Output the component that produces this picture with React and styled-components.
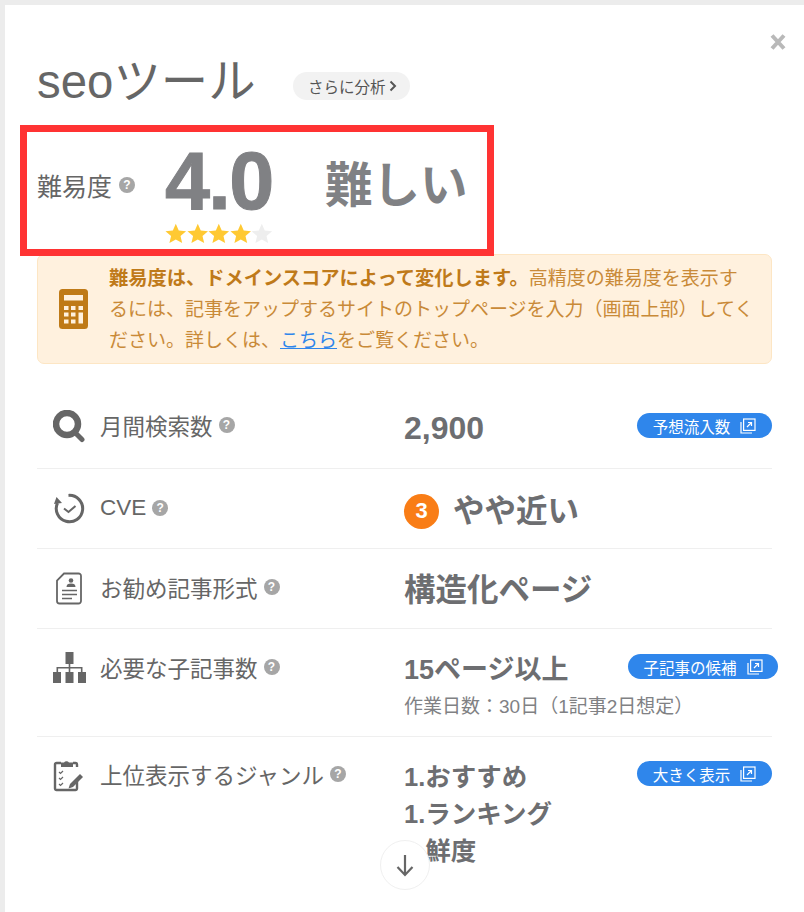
import React from 'react';
import styled, { createGlobalStyle } from 'styled-components';

const GlobalStyle = createGlobalStyle`
  html, body {
    margin: 0;
    padding: 0;
    background: #ececec;
    font-family: "Liberation Sans", "Noto Sans CJK JP", sans-serif;
  }
`;

const Backdrop = styled.div`
  width: 804px;
  height: 912px;
  box-sizing: border-box;
  padding: 5px 0 0 5px;
  overflow: hidden;
`;

const Modal = styled.div`
  position: relative;
  height: 907px;
  box-sizing: border-box;
  padding: 0 32px;
  background: #fff;
  overflow: hidden;
`;

const CloseButton = styled.div`
  position: absolute;
  top: 28px;
  right: 17px;
  width: 18px;
  height: 18px;
  color: #b9b9b9;
`;

const TitleRow = styled.div`
  display: flex;
  align-items: center;
  height: 120px;
  padding-top: 34px;
  box-sizing: border-box;
`;

const Title = styled.h1`
  margin: 0;
  width: 218px;
  font-size: 47.4px;
  font-weight: 400;
  line-height: 60px;
  white-space: nowrap;
  color: #666;
`;

const AnalyzeButton = styled.div`
  display: flex;
  align-items: center;
  gap: 3px;
  width: 117px;
  height: 28px;
  margin: 8px 0 0 38px;
  box-sizing: border-box;
  padding-left: 15px;
  border-radius: 14px;
  background: #f2f2f2;
  color: #555;
  font-size: 15.5px;
  white-space: nowrap;
`;

const DifficultyBox = styled.div`
  position: relative;
  z-index: 1;
  display: flex;
  align-items: flex-start;
  width: 474px;
  height: 131px;
  box-sizing: border-box;
  margin-left: -17px;
  padding-left: 10px;
  border: 7px solid #ff3333;
`;

const DifficultyLabel = styled.div`
  display: flex;
  align-items: center;
  gap: 7px;
  width: 128px;
  height: 106px;
  color: #666;
  font-size: 25px;
`;

const ScoreColumn = styled.div`
  display: flex;
  flex-direction: column;
  width: 160px;
`;

const Score = styled.div`
  padding-top: 7px;
  font-size: 81px;
  font-weight: 700;
  line-height: 84px;
  letter-spacing: -1.700px;
  color: #808184;
  -webkit-text-stroke: 1px #808184;
`;

const Stars = styled.div`
  display: flex;
`;

const Star = styled.svg`
  display: block;
  width: 21.6px;
  height: 21px;
  fill: ${(p) => (p.$on ? '#ffc933' : '#eeeeee')};
`;

const ScoreWord = styled.div`
  font-size: 47.5px;
  font-weight: 700;
  line-height: 108px;
  color: #808184;
`;

const Notice = styled.div`
  display: flex;
  align-items: center;
  height: 110px;
  box-sizing: border-box;
  margin-top: -2px;
  border: 1px solid #fde6c4;
  border-radius: 7px;
  background: #fff1de;
`;

const NoticeIcon = styled.div`
  display: flex;
  justify-content: center;
  width: 71px;
  flex-shrink: 0;
`;

const NoticeText = styled.p`
  margin: 0;
  font-size: 19px;
  line-height: 31px;
  white-space: nowrap;
  color: #c98a38;

  b {
    color: #bf7a1a;
    font-size: 19.25px;
    font-weight: 700;
  }

  a {
    color: #2f86eb;
    text-decoration: underline;
  }
`;

const List = styled.div`
  margin-top: 24px;
`;

const Row = styled.div`
  display: flex;
  align-items: flex-start;
  height: ${(p) => p.$height}px;
  box-sizing: border-box;
  padding-top: ${(p) => p.$top || 22}px;
  border-bottom: ${(p) => (p.$last ? 'none' : '1px solid #efefef')};
`;

const RowIcon = styled.div`
  display: flex;
  justify-content: center;
  width: 63px;
  padding-left: 1px;
  box-sizing: border-box;
  flex-shrink: 0;
  color: #666;
`;

const RowLabel = styled.div`
  display: flex;
  align-items: center;
  gap: 6px;
  width: 304px;
  height: 30px;
  flex-shrink: 0;
  font-size: 22.5px;
  color: #666;
`;

const RowValue = styled.div`
  flex: 1;
  min-width: 0;
`;

const ValueLine = styled.div`
  display: flex;
  align-items: flex-start;
  justify-content: space-between;
`;

const BigValue = styled.div`
  display: flex;
  align-items: center;
  gap: 14px;
  font-size: ${(p) => p.$size || 31.5}px;
  font-weight: 700;
  line-height: 36px;
  color: #6d6e71;
`;

const Rank = styled.span`
  display: flex;
  align-items: center;
  justify-content: center;
  width: 35px;
  height: 35px;
  border-radius: 50%;
  background: #f97d16;
  color: #fff;
  font-size: 22px;
  font-weight: 700;
`;

const SubValue = styled.div`
  margin-top: 7px;
  font-size: 19px;
  line-height: 24px;
  color: #808184;
`;

const GenreList = styled.div`
  font-size: 25.5px;
  font-weight: 700;
  line-height: 37px;
  color: #6d6e71;
`;

const BlueButton = styled.div`
  display: flex;
  align-items: center;
  justify-content: center;
  gap: 10px;
  flex-shrink: 0;
  width: ${(p) => p.$width}px;
  height: 25px;
  margin-top: ${(p) => p.$drop}px;
  margin-right: ${(p) => p.$shift || 0}px;
  border-radius: 13px;
  background: #2f86eb;
  color: #fff;
  font-size: 15.5px;
`;

const TopAligned = styled.div`
  display: flex;
  justify-content: space-between;
  align-items: flex-start;
`;

const ScrollDown = styled.div`
  position: absolute;
  left: 375px;
  top: 835px;
  display: flex;
  align-items: center;
  justify-content: center;
  width: 50px;
  height: 50px;
  box-sizing: border-box;
  border: 1px solid #f0f0f0;
  border-radius: 50%;
  background: #fff;
  color: #666;
`;

const QuestionBadge = styled.span`
  display: inline-flex;
  align-items: center;
  justify-content: center;
  width: 16px;
  height: 16px;
  border-radius: 50%;
  background: #a6a6a6;
  color: #fff;
  font-size: 12px;
  font-weight: 700;
`;

const SearchIcon = () => (
  <svg width="32" height="33" viewBox="0 0 32 33" fill="none" stroke="currentColor">
    <circle cx="14" cy="14" r="11" strokeWidth="6.500" />
    <path d="M23 23.500l6 6" strokeWidth="5" strokeLinecap="round" />
  </svg>
);

const CycleIcon = () => (
  <svg width="32" height="32" viewBox="0 0 32 32" fill="none" stroke="currentColor">
    <path d="M4.500 10A13.200 13.200 0 1 0 15.500 2.400" strokeWidth="3" />
    <path d="M1 11l2.500-7 5.500 6z" fill="currentColor" stroke="none" />
    <path d="M11 15.500l4.500 3.500 7-6" strokeWidth="2" />
  </svg>
);

const ProfileDocIcon = () => (
  <svg width="28" height="33" viewBox="0 0 28 33" fill="none" stroke="currentColor">
    <path d="M9 1.500h14.500a2.500 2.500 0 0 1 2.500 2.500v25a2.500 2.500 0 0 1-2.500 2.500h-19A2.500 2.500 0 0 1 2 29V8.500z" strokeWidth="1.800" />
    <circle cx="16" cy="8.500" r="2.300" fill="currentColor" stroke="none" />
    <path d="M11.500 15c0-2.500 1.500-3.500 4.500-3.500s4.500 1 4.500 3.500z" fill="currentColor" stroke="none" />
    <path d="M7 18.500h15M7 22.500h15M7 26.500h10" strokeWidth="1.600" />
  </svg>
);

const SitemapIcon = () => (
  <svg width="33" height="31" viewBox="0 0 33 31" fill="currentColor" stroke="none">
    <rect x="12.500" y="0" width="8" height="12" />
    <rect x="0" y="20" width="8" height="11" />
    <rect x="12.500" y="20" width="8" height="11" />
    <rect x="25" y="20" width="8" height="11" />
    <path d="M15.700 12h1.600v3h12.200v5h-1.600v-3.400h-10.600v3.400h-1.600v-3.400H5.100v3.400H3.500v-5h12.200z" />
  </svg>
);

const ClipboardIcon = () => (
  <svg width="32" height="33" viewBox="0 0 32 33" fill="none" stroke="currentColor">
    <path d="M8 4H3.500A1.500 1.500 0 0 0 2 5.500V29.500A1.500 1.500 0 0 0 3.500 31h19a1.500 1.500 0 0 0 1.500-1.500V21" strokeWidth="2.400" />
    <path d="M20 4h2.500A1.500 1.500 0 0 1 24 5.500V8" strokeWidth="2.400" />
    <path d="M8 3.500h3a3 3 0 0 1 5 0h4V8H8z" fill="currentColor" stroke="none" />
    <path d="M6 13l1.500 1.500 2.500-2.500M6 19l1.500 1.500 2.500-2.500M6 25l1.500 1.500 2.500-2.500" strokeWidth="1.200" />
    <path d="M17 25l-1.500 4.500 4.500-1.500L30 18l-3-3z" fill="currentColor" stroke="none" />
  </svg>
);

const CalculatorIcon = () => (
  <svg width="29" height="40" viewBox="0 0 29 40">
    <rect width="29" height="40" rx="3.500" fill="#bf7a17" />
    <rect x="5" y="6" width="19" height="5.500" fill="#fff1de" />
    <g fill="#fff1de">
      <rect x="5" y="17" width="4.500" height="4" />
      <rect x="12" y="17" width="4.500" height="4" />
      <rect x="19.500" y="17" width="4.500" height="4" />
      <rect x="5" y="23.500" width="4.500" height="4" />
      <rect x="12" y="23.500" width="4.500" height="4" />
      <rect x="19.500" y="23.500" width="4.500" height="11" />
      <rect x="5" y="30.500" width="4.500" height="4" />
      <rect x="12" y="30.500" width="4.500" height="4" />
    </g>
  </svg>
);

const ExternalIcon = () => (
  <svg width="16" height="16" viewBox="0 0 16 16" fill="none" stroke="currentColor" strokeWidth="1.200">
    <path d="M1 4v11h11" />
    <rect x="3.600" y="1" width="11.400" height="11.400" />
    <path d="M7 9l4.500-4.500M8 4.500h3.500V8" />
  </svg>
);

const rows = [
  { key: 'volume', label: '月間検索数', icon: <SearchIcon />, height: 81, top: 22 },
  { key: 'cve', label: 'CVE', icon: <CycleIcon />, height: 80, top: 24 },
  { key: 'format', label: 'お勧め記事形式', icon: <ProfileDocIcon />, height: 80, top: 23 },
  { key: 'pages', label: '必要な子記事数', icon: <SitemapIcon />, height: 108, top: 23 },
  { key: 'genre', label: '上位表示するジャンル', icon: <ClipboardIcon />, height: 140, top: 22, last: true },
];

const rowValue = (key) => {
  if (key === 'volume') {
    return (
      <ValueLine>
        <BigValue $size={32}>2,900</BigValue>
        <BlueButton $width={135} $drop={3}>予想流入数<ExternalIcon /></BlueButton>
      </ValueLine>
    );
  }
  if (key === 'cve') {
    return <BigValue><Rank>3</Rank>やや近い</BigValue>;
  }
  if (key === 'format') {
    return <BigValue>構造化ページ</BigValue>;
  }
  if (key === 'pages') {
    return (
      <>
        <ValueLine>
          <BigValue $size={27}>15ページ以上</BigValue>
          <BlueButton $width={150} $shift={-6} $drop={2}>子記事の候補<ExternalIcon /></BlueButton>
        </ValueLine>
        <SubValue>作業日数：30日（1記事2日想定）</SubValue>
      </>
    );
  }
  return (
    <TopAligned>
      <GenreList>
        <div>1.おすすめ</div>
        <div>1.ランキング</div>
        <div>1.鮮度</div>
      </GenreList>
      <BlueButton $width={135} $drop={2}>大きく表示<ExternalIcon /></BlueButton>
    </TopAligned>
  );
};

export default function App() {
  return (
    <Backdrop>
      <GlobalStyle />
      <Modal>
        <CloseButton>
          <svg width="18" height="18" viewBox="0 0 18 18" fill="none" stroke="currentColor" strokeWidth="4">
            <path d="M3 2.500l12 13M15 2.500l-12 13" />
          </svg>
        </CloseButton>
        <TitleRow>
          <Title>seoツール</Title>
          <AnalyzeButton>
            さらに分析
            <svg width="8" height="12" viewBox="0 0 8 12" fill="none" stroke="currentColor" strokeWidth="2">
              <path d="M1.500 1.500l4.500 4.500-4.500 4.500" />
            </svg>
          </AnalyzeButton>
        </TitleRow>
        <DifficultyBox>
          <DifficultyLabel>難易度<QuestionBadge>?</QuestionBadge></DifficultyLabel>
          <ScoreColumn>
            <Score>4.0</Score>
            <Stars>
              {[1, 2, 3, 4, 5].map((n) => (
                <Star key={n} $on={n <= 4} viewBox="0 0 22 21">
                  <path d="M11 .5l3 6.900 7.500.7-5.700 4.900 1.700 7.300L11 16.500l-6.500 3.800 1.700-7.300L.5 8.100 8 7.400z" />
                </Star>
              ))}
            </Stars>
          </ScoreColumn>
          <ScoreWord>難しい</ScoreWord>
        </DifficultyBox>
        <Notice>
          <NoticeIcon><CalculatorIcon /></NoticeIcon>
          <NoticeText>
            <b>難易度は、ドメインスコアによって変化します。</b>高精度の難易度を表示す<br />
            るには、記事をアップするサイトのトップページを入力（画面上部）してく<br />
            ださい。詳しくは、<a>こちら</a>をご覧ください。
          </NoticeText>
        </Notice>
        <List>
          {rows.map((row) => (
            <Row key={row.key} $height={row.height} $top={row.top} $last={row.last}>
              <RowIcon>{row.icon}</RowIcon>
              <RowLabel>{row.label}<QuestionBadge>?</QuestionBadge></RowLabel>
              <RowValue>{rowValue(row.key)}</RowValue>
            </Row>
          ))}
        </List>
        <ScrollDown>
          <svg width="22" height="24" viewBox="0 0 22 24" fill="none" stroke="currentColor" strokeWidth="2.200">
            <path d="M11 2v20M3.500 14l7.500 8 7.500-8" />
          </svg>
        </ScrollDown>
      </Modal>
    </Backdrop>
  );
}
